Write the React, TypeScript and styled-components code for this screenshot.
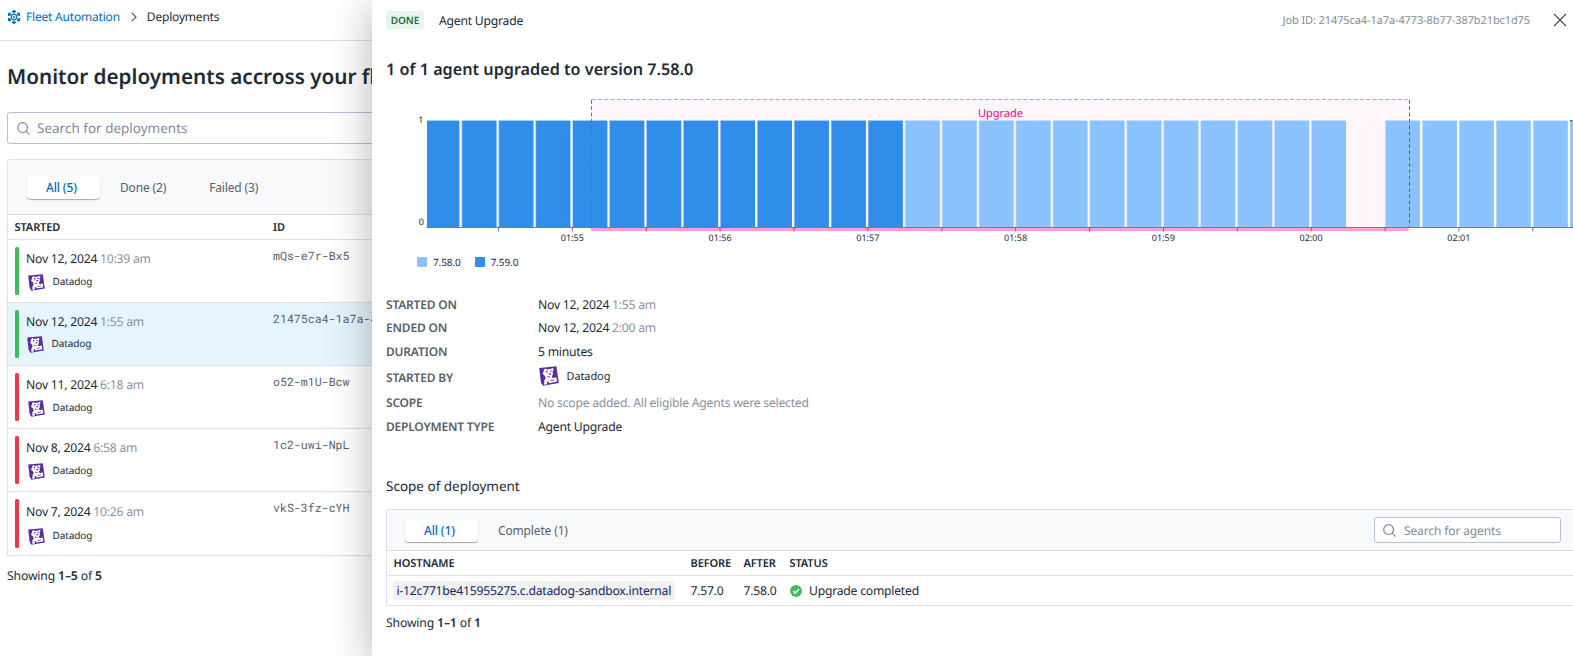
import React from "react";
import styled, { createGlobalStyle } from "styled-components";

const GlobalStyle = createGlobalStyle`
  *, *::before, *::after { box-sizing: border-box; }
  html, body { margin: 0; padding: 0; overflow: hidden; }
  body {
    font-family: "Noto Sans", "Open Sans", sans-serif;
    font-size: 12.2px;
    letter-spacing: -0.24px;
    color: #1c2b34;
    background: #fff;
    text-rendering: geometricPrecision;
  }
`;

const Page = styled.div`
  position: relative;
  width: 100%;
  height: 656px;
  overflow: hidden;
  white-space: nowrap;
`;

const Breadcrumbs = styled.header`
  display: flex;
  align-items: center;
  height: 41px;
  padding: 0 0 7px 7px;
  border-bottom: 1px solid #dcdfea;
  font-size: 12px;
  font-weight: 450;
  letter-spacing: -0.2px;
`;

const CrumbLink = styled.a`
  display: flex;
  align-items: center;
  gap: 5px;
  color: #006bc2;
`;

const Chevron = styled.svg`
  margin: 0 10px 0 11px;
`;

const Main = styled.main`
  padding: 22px 0 0 7px;
`;

const PageTitle = styled.h1`
  margin: 0;
  height: 30px;
  line-height: 28px;
  font-size: 20.7px;
  font-weight: 600;
  letter-spacing: 0;
`;

const SearchField = styled.label<{ $compact?: boolean }>`
  display: flex;
  align-items: center;
  background: #fff;
  color: #828b94;
  border: 1px solid #b9bedb;
  border-radius: 3px;
  height: ${(p) => (p.$compact ? 26 : 32)}px;
  width: ${(p) => (p.$compact ? "187px" : "auto")};
  font-size: ${(p) => (p.$compact ? 12 : 13.5)}px;
  letter-spacing: ${(p) => (p.$compact ? -0.12 : 0)}px;
  padding-left: ${(p) => (p.$compact ? 8 : 9)}px;
  gap: ${(p) => (p.$compact ? 8 : 7)}px;
`;

const MainSearch = styled.div`
  margin: 19px 0 15px;
`;

const Panel = styled.section`
  border: 1px solid #dcdfea;
  border-right: 0;
  border-radius: 4px 0 0 0;
`;

const TabBar = styled.div<{ $h: number; $pad: number }>`
  display: flex;
  align-items: center;
  height: ${(p) => p.$h}px;
  padding: 0 12px 0 ${(p) => p.$pad}px;
  background: #f8f9fb;
  border-bottom: 1px solid #dcdfea;
  border-radius: 4px 0 0 0;
`;

const Tab = styled.button<{ $active?: boolean; $gap?: number }>`
  display: flex;
  align-items: center;
  height: 23px;
  border: 0;
  padding: 0 0 0 ${(p) => (p.$active ? 19 : 0)}px;
  width: ${(p) => (p.$active ? "73px" : "auto")};
  margin-left: ${(p) => p.$gap ?? 0}px;
  font: ${(p) => (p.$active ? 500 : 400)} 12px "Noto Sans", sans-serif;
  letter-spacing: -0.15px;
  color: ${(p) => (p.$active ? "#006bc2" : "#585f66")};
  background: ${(p) => (p.$active ? "#fff" : "transparent")};
  border-radius: 4px;
  box-shadow: ${(p) => (p.$active ? "0 1px 1px rgba(40,45,60,.4)" : "none")};
`;

const Spacer = styled.div`
  flex: 1;
`;

const HeadRow = styled.div<{ $cols: string }>`
  display: grid;
  grid-template-columns: ${(p) => p.$cols};
  align-items: center;
  height: 25px;
  padding-left: 6.5px;
  border-bottom: 1px solid #dcdfea;
  font-size: 11px;
  font-weight: 600;
  letter-spacing: -0.1px;
`;

const DeploymentRow = styled.div<{ $selected?: boolean; $last?: boolean }>`
  display: grid;
  grid-template-columns: 11px 247px auto;
  height: 63px;
  padding: 7px 0 7px 7px;
  border-bottom: ${(p) => (p.$last ? 0 : 1)}px solid #dcdfea;
  background: ${(p) => (p.$selected ? "#e6f5fd" : "#fff")};
`;

const StatusBar = styled.span<{ $ok: boolean }>`
  width: 4px;
  border-radius: 1.5px;
  background: ${(p) => (p.$ok ? "#3bbd5c" : "#eb364b")};
`;

const Started = styled.div<{ $shift: number }>`
  padding-top: ${(p) => 2 + p.$shift}px;
  line-height: 20px;
`;

const Muted = styled.span`
  color: #8b9299;
`;

const User = styled.div<{ $top?: number; $left?: number }>`
  display: flex;
  align-items: flex-start;
  gap: 8px;
  margin-top: ${(p) => p.$top ?? 0}px;
  padding-left: ${(p) => p.$left ?? 0.5}px;
`;

const UserName = styled.span<{ $size: number; $lh: number }>`
  font-size: ${(p) => p.$size}px;
  line-height: ${(p) => p.$lh}px;
  letter-spacing: -0.1px;
  color: #1c2b34;
`;

const JobCode = styled.code`
  padding-top: 1px;
  font-family: "Roboto Mono", "Liberation Mono", monospace;
  font-size: 11.6px;
  line-height: 18px;
  letter-spacing: 0;
  color: #585f66;
`;

const Showing = styled.p<{ $top: number }>`
  margin: 0;
  padding-top: ${(p) => p.$top}px;
  line-height: 20px;
  letter-spacing: -0.15px;
  b { font-weight: 600; }
`;

const Drawer = styled.aside`
  position: absolute;
  top: 0;
  right: 0;
  bottom: 0;
  left: 372px;
  padding-left: 14px;
  background: #fff;
  box-shadow: 0 8px 40px rgba(0, 0, 0, 0.3);
`;

const DrawerHeader = styled.div`
  display: flex;
  align-items: center;
  height: 40px;
  padding-right: 6px;
`;

const Badge = styled.span`
  display: flex;
  align-items: center;
  justify-content: center;
  width: 38px;
  height: 18px;
  margin-right: 14px;
  border-radius: 3px;
  background: #e6f6ea;
  color: #217039;
  font-size: 10px;
  font-weight: 600;
  letter-spacing: 0;
`;

const DrawerKind = styled.span`
  flex: 1;
  padding: 1px 0 0 1px;
`;

const JobId = styled.span`
  margin-right: 23px;
  padding-top: 1px;
  font-size: 11px;
  letter-spacing: -0.1px;
  color: #828b94;
`;

const DrawerTitle = styled.h2`
  margin: 17px 0 14px;
  line-height: 24px;
  height: 24px;
  font-size: 16.2px;
  font-weight: 600;
  letter-spacing: 0;
`;

const ChartSvg = styled.svg`
  display: block;
  margin-left: -14px;
  letter-spacing: 0;
  text {
    font-family: "Noto Sans", sans-serif;
    font-size: 9px;
    fill: #1c2b34;
  }
  text.span-label {
    font-size: 11px;
    fill: #ee0290;
  }
`;

const Legend = styled.div`
  display: flex;
  align-items: center;
  gap: 14px;
  height: 20px;
  padding-left: 31px;
  margin-top: 1px;
  font-size: 10px;
  letter-spacing: -0.1px;
`;

const LegendItem = styled.span<{ $color: string }>`
  display: flex;
  align-items: center;
  gap: 6px;
  &::before {
    content: "";
    width: 10px;
    height: 10px;
    border-radius: 1px;
    background: ${(p) => p.$color};
  }
`;

const Details = styled.dl`
  display: grid;
  grid-template-columns: 152px auto;
  grid-template-rows: 23px 24px 24px 27px 24px 24px;
  margin: 21px 0 0;
  line-height: 24px;
`;

const Term = styled.dt<{ $shift?: number }>`
  padding-top: ${(p) => p.$shift ?? 0}px;
  color: #585f66;
  font-weight: 600;
  font-size: 12px;
  letter-spacing: -0.2px;
`;

const Value = styled.dd`
  margin: 0;
`;

const SectionTitle = styled.h3`
  margin: 35px 0 11px;
  height: 24px;
  line-height: 24px;
  font-size: 13.5px;
  font-weight: 400;
  letter-spacing: 0;
`;

const AGENT_COLS = "297px 53px 46px auto";

const AgentRow = styled.div`
  display: grid;
  grid-template-columns: ${AGENT_COLS};
  align-items: center;
  height: 29px;
  padding-left: 6.5px;
`;

const HostChip = styled.span`
  justify-self: start;
  padding: 0 4px;
  margin-left: -1px;
  height: 19px;
  line-height: 19px;
  border-radius: 3px;
  background: #f1f1f2;
  color: #122765;
`;

const AgentStatus = styled.span`
  display: flex;
  align-items: center;
  gap: 7px;
  padding-left: 0.5px;
`;

function SearchIcon() {
  return (
    <svg width="13" height="13" viewBox="0 0 13 13" fill="none" stroke="#828b94" strokeWidth="1.2">
      <circle cx="5.6" cy="5.6" r="4.9" />
      <path d="M9.2 9.2 12.5 12.6" />
    </svg>
  );
}

function FleetIcon() {
  return (
    <svg width="14" height="14" viewBox="0 0 14 14" fill="none" stroke="#006bc2">
      <path d="M7 1 12.2 4v6L7 13 1.8 10V4Z" strokeWidth="1.7" strokeDasharray="4.2 1.8" strokeDashoffset="2.1" />
      <circle cx="7" cy="7" r="2.7" strokeWidth="1.1" />
      <circle cx="7" cy="7" r="1" fill="#006bc2" stroke="none" />
      <path d="M7 .3v3.4M7 10.3v3.4M1.2 3.6l2.7 1.6M12.8 3.6l-2.7 1.6M1.2 10.4l2.7-1.6M12.8 10.4l-2.7-1.6" strokeWidth="1.2" />
    </svg>
  );
}

function DogAvatar({ size }: { size: number }) {
  return (
    <svg width={size} height={size} viewBox="0 0 20 20">
      <path d="M.2 1.9 17.4.2 19.8 17 4 19.8 1.9 16.2Z" fill="#5b2da0" />
      <path
        d="M5 3.4 6.6 2.4 8 3.6 12.2 2.8 13.8 2 14.8 3.4 13.6 5.6 14 8.2 12.8 10.2 13.8 12 17.4 11.2 18 15.6 10 17.2 9.2 15.4 8 15.6 8 18.2 5.2 18.8 5.2 14.8 6.8 11.8 5.4 9.4 3.6 7.8 4.6 5.6Z"
        fill="#fff"
      />
      <path d="M7 4.8h1.5v1.6H7zM11.2 4.4h1.4v1.4h-1.4zM9.6 7.4l2.4-.4.2 1.2-2 .5zM8 10.2l3.6.6-.5.8-3-.5zM11.2 14.4l4-.9.2.7-4 1z" fill="#5b2da0" />
    </svg>
  );
}

function CheckIcon() {
  return (
    <svg width="12" height="12" viewBox="0 0 12 12" fill="none">
      <circle cx="6" cy="6" r="5.9" fill="#3bbd5c" />
      <path d="M3.2 6.2 5.2 8.1 8.9 4.3" stroke="#fff" strokeWidth="1.6" />
    </svg>
  );
}

const deployments = [
  { date: "Nov 12, 2024", time: "10:39 am", id: "mQs-e7r-Bx5", ok: true },
  { date: "Nov 12, 2024", time: "1:55 am", id: "21475ca4-1a7a-4", ok: true, selected: true },
  { date: "Nov 11, 2024", time: "6:18 am", id: "o52-m1U-Bcw", ok: false },
  { date: "Nov 8, 2024", time: "6:58 am", id: "1c2-uwi-NpL", ok: false },
  { date: "Nov 7, 2024", time: "10:26 am", id: "vkS-3fz-cYH", ok: false },
];

const PITCH = 36.94;
const FIRST = 126.4;
const OLD = "#8ac3ff";
const NEW = "#308dea";
const tickLabels = ["01:55", "01:56", "01:57", "01:58", "01:59", "02:00", "02:01"];

function UpgradeChart() {
  const bars: { x: number; w: number; color: string }[] = [{ x: 55, w: 32.3, color: NEW }];
  for (let i = -1; i <= 29; i++) {
    if (i === 23) continue;
    bars.push({ x: FIRST + i * PITCH, w: 35, color: i < 11 ? NEW : OLD });
  }
  return (
    <ChartSvg width="1201" height="156" viewBox="0 95 1201 156">
      <rect x="219.5" y="99.5" width="818" height="128" fill="#fff6fc" />
      {bars.map((b) => (
        <g key={b.x}>
          <rect x={b.x} y="120" width={b.w} height="107" fill={b.color} opacity=".45" />
          <rect x={b.x + (b.x === 55 ? 0 : 0.8)} y="121" width={b.w - (b.x === 55 ? 0 : 0.8)} height="106" fill={b.color} />
        </g>
      ))}
      <rect x="1198" y="120" width="2.3" height="1.4" fill="#0b6fdc" />
      <rect x="219" y="228" width="817.5" height="3" fill="#ff9fd3" />
      <path d="M54.5 227.5H1201" stroke="#6f7b99" />
      {Array.from({ length: 15 }, (_, k) => (
        <path key={k} d={`M${126.5 + k * PITCH * 2} 227v4.5`} stroke="#5a3d78" strokeOpacity=".7" />
      ))}
      <path d="M219.5 99.5H1037.5" stroke="#ff80c0" strokeDasharray="4 2.35" />
      <path d="M219.5 100V227" stroke="#ee2a9e" strokeDasharray="3.8 2.5" />
      <path d="M1037.5 100V227" stroke="#ee0f94" strokeDasharray="3.8 2.5" />
      <text className="span-label" x="628.5" y="117" textAnchor="middle">Upgrade</text>
      <text x="51.5" y="123" textAnchor="end">1</text>
      <text x="52" y="225" textAnchor="end">0</text>
      {tickLabels.map((t, i) => (
        <text key={t} x={200.3 + i * PITCH * 4} y="241.2" textAnchor="middle">{t}</text>
      ))}
    </ChartSvg>
  );
}

export default function App() {
  return (
    <Page>
      <GlobalStyle />
      <Breadcrumbs>
        <CrumbLink><FleetIcon />Fleet Automation</CrumbLink>
        <Chevron width="6" height="10" viewBox="0 0 6 10" fill="none" stroke="#585f66" strokeWidth="1.2">
          <path d="M.8.8 5 5 .8 9.2" />
        </Chevron>
        <span>Deployments</span>
      </Breadcrumbs>
      <Main>
        <PageTitle>Monitor deployments accross your fleet</PageTitle>
        <MainSearch>
          <SearchField><SearchIcon />Search for deployments</SearchField>
        </MainSearch>
        <Panel>
          <TabBar $h={55} $pad={19}>
            <Tab $active>All (5)</Tab>
            <Tab $gap={20}>Done (2)</Tab>
            <Tab $gap={43}>Failed (3)</Tab>
          </TabBar>
          <HeadRow $cols="258.5px auto"><span>STARTED</span><span>ID</span></HeadRow>
          {deployments.map((d, i) => (
            <DeploymentRow key={d.id} $selected={d.selected} $last={i === 4}>
              <StatusBar $ok={d.ok} />
              <div>
                <Started $shift={i === 4 ? 1 : 0}>{d.date} <Muted>{d.time}</Muted></Started>
                <User $top={i === 1 ? 4 : i === 4 ? 6 : 5} $left={d.selected ? 0.5 : 1.5}>
                  <DogAvatar size={17} />
                  <UserName $size={10} $lh={15}>Datadog</UserName>
                </User>
              </div>
              <JobCode>{d.id}</JobCode>
            </DeploymentRow>
          ))}
        </Panel>
        <Showing $top={10}>Showing <b>1–5</b> of <b>5</b></Showing>
      </Main>
      <Drawer>
        <DrawerHeader>
          <Badge>DONE</Badge>
          <DrawerKind>Agent Upgrade</DrawerKind>
          <JobId>Job ID: 21475ca4-1a7a-4773-8b77-387b21bc1d75</JobId>
          <svg width="14" height="14" viewBox="0 0 14 14" stroke="#4a545e" strokeWidth="1.2">
            <path d="M1 1 13 13M13 1 1 13" />
          </svg>
        </DrawerHeader>
        <DrawerTitle>1 of 1 agent upgraded to version 7.58.0</DrawerTitle>
        <UpgradeChart />
        <Legend>
          <LegendItem $color={OLD}>7.58.0</LegendItem>
          <LegendItem $color={NEW}>7.59.0</LegendItem>
        </Legend>
        <Details>
          <Term>STARTED ON</Term><Value>Nov 12, 2024 <Muted>1:55 am</Muted></Value>
          <Term>ENDED ON</Term><Value>Nov 12, 2024 <Muted>2:00 am</Muted></Value>
          <Term>DURATION</Term><Value>5 minutes</Value>
          <Term $shift={2}>STARTED BY</Term>
          <Value>
            <User $top={2}><DogAvatar size={20} /><UserName $size={11} $lh={21}>Datadog</UserName></User>
          </Value>
          <Term>SCOPE</Term><Value><Muted>No scope added. All eligible Agents were selected</Muted></Value>
          <Term>DEPLOYMENT TYPE</Term><Value>Agent Upgrade</Value>
        </Details>
        <SectionTitle>Scope of deployment</SectionTitle>
        <Panel>
          <TabBar $h={41} $pad={18}>
            <Tab $active>All (1)</Tab>
            <Tab $gap={20}>Complete (1)</Tab>
            <Spacer />
            <SearchField $compact><SearchIcon />Search for agents</SearchField>
          </TabBar>
          <HeadRow $cols={AGENT_COLS}>
            <span>HOSTNAME</span><span>BEFORE</span><span>AFTER</span><span>STATUS</span>
          </HeadRow>
          <AgentRow>
            <HostChip>i-12c771be415955275.c.datadog-sandbox.internal</HostChip>
            <span>7.57.0</span>
            <span>7.58.0</span>
            <AgentStatus><CheckIcon />Upgrade completed</AgentStatus>
          </AgentRow>
        </Panel>
        <Showing $top={7}>Showing <b>1–1</b> of <b>1</b></Showing>
      </Drawer>
    </Page>
  );
}
